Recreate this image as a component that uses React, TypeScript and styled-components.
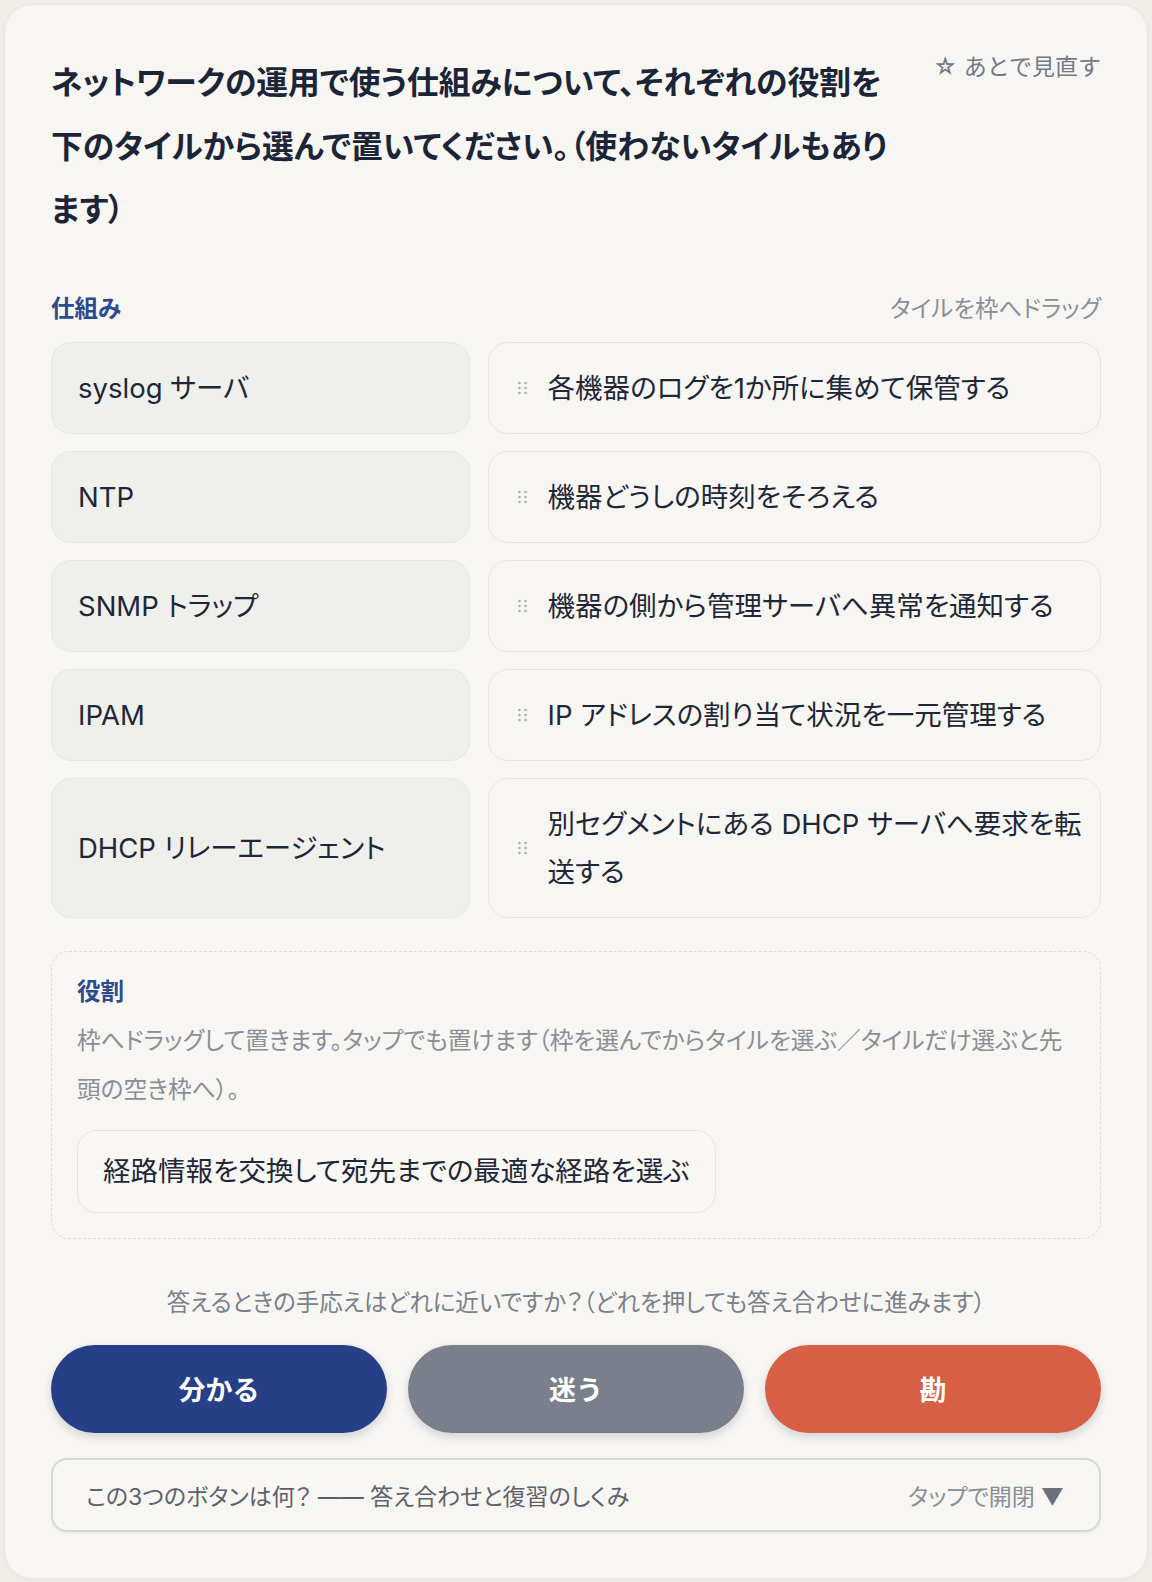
import styled, { createGlobalStyle } from "styled-components";

const GlobalStyle = createGlobalStyle`
  html, body {
    margin: 0;
    padding: 0;
    background: #efeee9;
  }
  body {
    font-family: Inter, "Noto Sans CJK JP", sans-serif;
    font-feature-settings: "palt";
    color: #1d2636;
  }
  button {
    font-family: inherit;
  }
`;

interface Pair {
  term: string;
  role: string;
}

const pairs: Pair[] = [
  { term: "syslog サーバ", role: "各機器のログを1か所に集めて保管する" },
  { term: "NTP", role: "機器どうしの時刻をそろえる" },
  { term: "SNMP トラップ", role: "機器の側から管理サーバへ異常を通知する" },
  { term: "IPAM", role: "IP アドレスの割り当て状況を一元管理する" },
  { term: "DHCP リレーエージェント", role: "別セグメントにある DHCP サーバへ要求を転送する" },
];

const Page = styled.div`
  padding: 4px;
`;

const Card = styled.div`
  background: #f7f6f3;
  border: 1px solid #e8e7e2;
  border-radius: 28px;
  padding: 46px;
  box-shadow: 0 1px 4px rgba(0, 0, 0, 0.04);
`;

const QuestionHead = styled.div`
  display: flex;
  align-items: flex-start;
  justify-content: space-between;
  gap: 36px;
`;

const Title = styled.h1`
  margin: 0;
  font-size: 31.8px;
  font-weight: 700;
  line-height: 63.5px;
  color: #1b2537;
`;

const LaterButton = styled.button`
  flex-shrink: 0;
  border: none;
  background: none;
  padding: 0;
  font-size: 23px;
  line-height: 32px;
  color: #737985;
  white-space: nowrap;
  cursor: pointer;
`;

const SectionHead = styled.div`
  display: flex;
  align-items: center;
  justify-content: space-between;
  margin-top: 49px;
  height: 32px;
`;

const SectionLabel = styled.span`
  font-size: 23.5px;
  font-weight: 700;
  color: #2c4a8d;
`;

const DragHint = styled.span`
  font-size: 23.5px;
  color: #8b8f97;
`;

const PairList = styled.div`
  display: grid;
  grid-template-columns: 419fr 614fr;
  column-gap: 18px;
  row-gap: 17px;
  margin-top: 19px;
`;

const TermTile = styled.div`
  display: flex;
  align-items: center;
  min-height: 92px;
  box-sizing: border-box;
  padding: 0 26px;
  background: #eff0eb;
  border: 1px solid #e6e7e1;
  border-radius: 20px;
  font-size: 27.5px;
  line-height: 48px;
  color: #1e2737;
`;

const Slot = styled.div`
  display: flex;
  align-items: center;
  gap: 21px;
  padding: 21px 14px 21px 29px;
  background: #f7f6f3;
  border: 1px solid #e6e5e0;
  border-radius: 20px;
  font-size: 27.5px;
  line-height: 48px;
  color: #1e2737;
`;

const Handle = styled.svg`
  flex-shrink: 0;
  width: 9px;
  height: 14px;
`;

const RoleBox = styled.div`
  margin-top: 33px;
  padding: 25px;
  border: 1.5px dashed #dddcd7;
  border-radius: 18px;
`;

const RoleLabel = styled.div`
  font-size: 23.5px;
  font-weight: 700;
  line-height: 30px;
  color: #2c4a8d;
`;

const RoleHelp = styled.p`
  margin: 9px 0 0;
  font-size: 23.7px;
  line-height: 49px;
  color: #8a8e96;
`;

const Pool = styled.div`
  display: flex;
  flex-wrap: wrap;
  gap: 14px;
  margin-top: 16px;
`;

const PoolTile = styled.div`
  padding: 16.5px 25px;
  background: #f8f7f4;
  border: 1px solid #e6e5e0;
  border-radius: 20px;
  font-size: 27.5px;
  line-height: 48px;
  color: #1e2737;
`;

const Prompt = styled.p`
  margin: 47px 0 0;
  text-align: center;
  font-size: 23.5px;
  line-height: 34px;
  color: #7b808a;
`;

const Answers = styled.div`
  display: grid;
  grid-template-columns: repeat(3, 1fr);
  gap: 21px;
  margin-top: 25px;
`;

const AnswerButton = styled.button<{ $tone: string }>`
  height: 88px;
  border: none;
  border-radius: 999px;
  background: ${(p) => p.$tone};
  color: #ffffff;
  font-size: 27px;
  font-weight: 700;
  box-shadow: 0 4px 10px rgba(30, 30, 50, 0.16);
  cursor: pointer;
`;

const Explainer = styled.div`
  display: flex;
  align-items: center;
  justify-content: space-between;
  margin-top: 25px;
  height: 74px;
  box-sizing: border-box;
  padding: 0 35px 0 33px;
  border: 2px solid #d7d7d4;
  border-radius: 16px;
  box-shadow: 0 2px 2px rgba(0, 0, 0, 0.04);
  font-size: 23px;
  color: #5c616a;
`;

const Toggle = styled.span`
  color: #8a8e96;
  b {
    font-weight: 400;
    color: #6b717c;
    margin-left: 6px;
  }
`;

const DragDots = () => (
  <Handle viewBox="0 0 9 14">
    {[0, 1, 2].map((r) =>
      [0, 1].map((c) => (
        <circle key={`${r}-${c}`} cx={1.5 + c * 6} cy={2 + r * 5} r={1.3} fill="#aeb0b3" />
      ))
    )}
  </Handle>
);

export default function App() {
  return (
    <Page>
      <GlobalStyle />
      <Card>
        <QuestionHead>
          <Title>
            ネットワークの運用で使う仕組みについて、それぞれの役割を
            <br />
            下のタイルから選んで置いてください。（使わないタイルもあり
            <br />
            ます）
          </Title>
          <LaterButton>☆ あとで見直す</LaterButton>
        </QuestionHead>

        <SectionHead>
          <SectionLabel>仕組み</SectionLabel>
          <DragHint>タイルを枠へドラッグ</DragHint>
        </SectionHead>

        <PairList>
          {pairs.map((p) => (
            <>
              <TermTile key={p.term}>{p.term}</TermTile>
              <Slot key={p.role}>
                <DragDots />
                <span>{p.role}</span>
              </Slot>
            </>
          ))}
        </PairList>

        <RoleBox>
          <RoleLabel>役割</RoleLabel>
          <RoleHelp>
            枠へドラッグして置きます。タップでも置けます（枠を選んでからタイルを選ぶ／タイルだけ選ぶと先頭の空き枠へ）。
          </RoleHelp>
          <Pool>
            <PoolTile>経路情報を交換して宛先までの最適な経路を選ぶ</PoolTile>
          </Pool>
        </RoleBox>

        <Prompt>答えるときの手応えはどれに近いですか？（どれを押しても答え合わせに進みます）</Prompt>

        <Answers>
          <AnswerButton $tone="#273f87">分かる</AnswerButton>
          <AnswerButton $tone="#7a808b">迷う</AnswerButton>
          <AnswerButton $tone="#d65f45">勘</AnswerButton>
        </Answers>

        <Explainer>
          <span>この3つのボタンは何？ —— 答え合わせと復習のしくみ</span>
          <Toggle>
            タップで開閉<b>▼</b>
          </Toggle>
        </Explainer>
      </Card>
    </Page>
  );
}
